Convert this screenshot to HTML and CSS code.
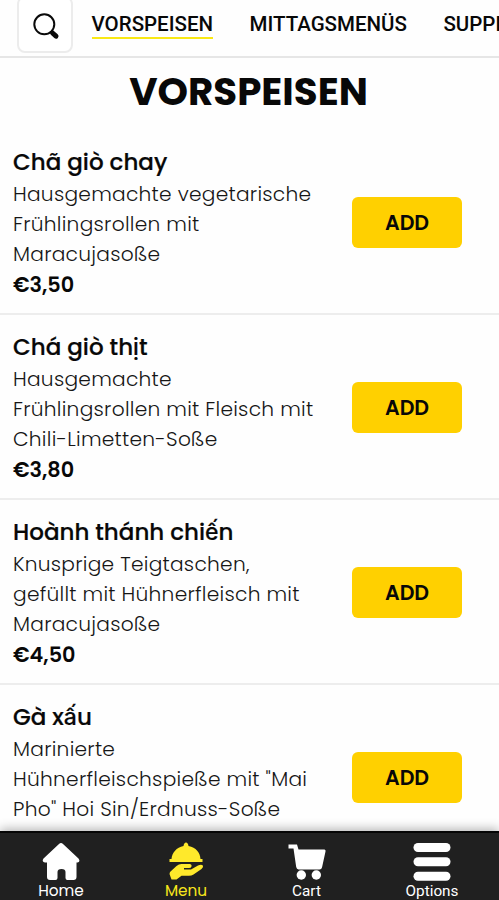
FILE: index.html
```html
<!DOCTYPE html>
<html lang="de">
<head>
<meta charset="utf-8">
<title>Vorspeisen</title>
<link rel="stylesheet" href="styles.css">
</head>
<body>
<div class="app">
  <header class="topbar">
    <button class="search" aria-label="Suche">
      <svg width="28" height="28" viewBox="0 0 28 28" fill="none" stroke="#0a0a0a"><circle cx="12.3" cy="11.3" r="10" stroke-width="2"/><path d="M19 18l2 2" stroke-width="3"/><path d="M20.500 20l3.500 3.200" stroke-width="5" stroke-linecap="round"/></svg>
    </button>
    <nav class="tabs">
      <a class="tab tab-active">VORSPEISEN</a>
      <a class="tab">MITTAGSMENÜS</a>
      <a class="tab">SUPPEN</a>
    </nav>
  </header>
  <main class="menu">
    <h1 class="title">VORSPEISEN</h1>
    <article class="item">
      <div class="info">
        <h2 class="name">Chã giò chay</h2>
        <p class="desc">Hausgemachte vegetarische<br>Frühlingsrollen mit<br>Maracujasoße</p>
        <p class="price">€3,50</p>
      </div>
      <button class="add">ADD</button>
    </article>
    <article class="item">
      <div class="info">
        <h2 class="name">Chá giò thịt</h2>
        <p class="desc">Hausgemachte<br>Frühlingsrollen mit Fleisch mit<br>Chili-Limetten-Soße</p>
        <p class="price">€3,80</p>
      </div>
      <button class="add">ADD</button>
    </article>
    <article class="item">
      <div class="info">
        <h2 class="name">Hoành thánh chiến</h2>
        <p class="desc">Knusprige Teigtaschen,<br>gefüllt mit Hühnerfleisch mit<br>Maracujasoße</p>
        <p class="price">€4,50</p>
      </div>
      <button class="add">ADD</button>
    </article>
    <article class="item">
      <div class="info">
        <h2 class="name">Gà xấu</h2>
        <p class="desc">Marinierte<br>Hühnerfleischspieße mit "Mai<br>Pho" Hoi Sin/Erdnuss-Soße</p>
      </div>
      <button class="add">ADD</button>
    </article>
  </main>
  <nav class="bottombar">
    <a class="dest">
      <svg width="40" height="40" viewBox="0 0 40 40" fill="#fff"><path d="M18 3Q20 1.200 22 3L37.500 17.500Q39.800 20.600 36.500 21.500H35.500V36Q35.500 39 32.500 39H26.500Q24.500 39 24.500 37V31Q24.500 28 20.500 28T16.500 31V37Q16.500 39 14.500 39H9Q6 39 6 36V21.500H4Q0.300 20.600 2.500 17.500Z"/></svg>
      <span>Home</span>
    </a>
    <a class="dest dest-active">
      <svg width="40" height="40" viewBox="0 0 40 40" fill="#ffe92b"><path d="M20 1.500Q22 1.500 22.500 5C30 6.200 34.200 12 34.500 18H36.500V21H3.500V18H5.500C6 12 10.500 6.200 17.500 5Q18 1.500 20 1.500Z"/><path d="M4 31L10.500 25Q13 22.800 16 23H23.500Q26 23.300 25.500 25.500Q25 27 23 27H18V28.500H25L32 24.500Q35.500 22.800 37 24.800Q37.500 26.300 35.500 28L27.500 33.500Q25.500 34.800 23 34.800H15.500L10.500 38.500H5.500L3.500 33Z"/></svg>
      <span>Menu</span>
    </a>
    <a class="dest dest-cart">
      <svg width="40" height="40" viewBox="0 0 40 40" fill="#fff"><path d="M1.500 3.500H10L11.500 8.500H37.500Q39 8.800 38.500 10.500L35 26.500Q34.500 28.300 32.500 28.500H11.500Q9.700 28 9.200 26L6.500 7.500H1.500Z"/><circle cx="14.300" cy="34" r="4.700"/><circle cx="29.300" cy="34" r="4.700"/></svg>
      <span>Cart</span>
    </a>
    <a class="dest dest-options">
      <svg width="40" height="40" viewBox="0 0 40 40" fill="#fff"><rect x="1.500" y="2" width="37" height="9" rx="4.500"/><rect x="1.500" y="16.300" width="37" height="9" rx="4.500"/><rect x="1.500" y="30.700" width="37" height="9" rx="4.500"/></svg>
      <span>Options</span>
    </a>
  </nav>
</div>
</body>
</html>
```
FILE: styles.css
```css
* { box-sizing: border-box; }
body { margin: 0; background: #fefefe; color: #080808; font-family: Poppins, Inter, sans-serif; }
.app { height: 900px; overflow: hidden; display: flex; flex-direction: column; }
button { font: inherit; color: inherit; padding: 0; }
.topbar { height: 58px; flex: none; border-bottom: 2px solid #e6e6e6; display: flex; align-items: flex-start; padding-left: 17px; overflow: hidden; }
.search { flex: none; width: 56px; height: 57px; margin-top: -4px; border: 2px solid #ececec; border-radius: 8px; background: #fff; display: flex; align-items: center; justify-content: center; padding: 4px 0 0 2px; }
.tabs { display: flex; flex: none; gap: 36.500px; margin-left: 18.500px; padding-top: 11px; font: 500 20.500px/27px Roboto, sans-serif; }
.tab { height: 28px; border-bottom: 2px solid transparent; white-space: nowrap; }
.tab-active { border-color: #f9e814; }
.menu { flex: 1; min-height: 0; overflow: hidden; }
.title { margin: 0; height: 72px; padding: 10px 2px 0 0; text-align: center; font-size: 38.800px; font-weight: 700; line-height: 48px; }
.item { height: 185px; border-bottom: 2px solid #ededed; padding: 15px 37px 0 13px; display: flex; justify-content: space-between; }
.info { white-space: nowrap; }
.name { margin: 0; font-size: 23px; font-weight: 500; line-height: 34px; -webkit-text-stroke: .2px #080808; }
.desc { margin: 0; font-size: 20.200px; letter-spacing: .260px; font-weight: 300; line-height: 30.200px; color: #161616; }
.price { margin: 0; font-size: 20.800px; font-weight: 600; line-height: 30.400px; }
.add { flex: none; width: 110px; height: 51px; margin-top: 52px; border: 0; border-radius: 6px; background: #ffd000; font-size: 20.500px; font-weight: 600; }
.bottombar { flex: none; height: 69px; position: relative; display: flex; background: #202020; border-top: 2px solid #050505; box-shadow: 0 -2px 10px rgba(0,0,0,.3); color: #fff; }
.dest { width: 122px; flex: none; display: flex; flex-direction: column; align-items: center; padding-top: 8px; font-size: 15.300px; line-height: 19px; }
.dest-cart span, .dest-options span { padding-top: 1px; }
.dest-active { width: 128px; color: #f8e71c; }
.dest-cart { width: 113px; font-family: Roboto, sans-serif; }
.dest-options { width: 138px; font-family: Roboto, sans-serif; }
.dest svg { flex: none; }
```
